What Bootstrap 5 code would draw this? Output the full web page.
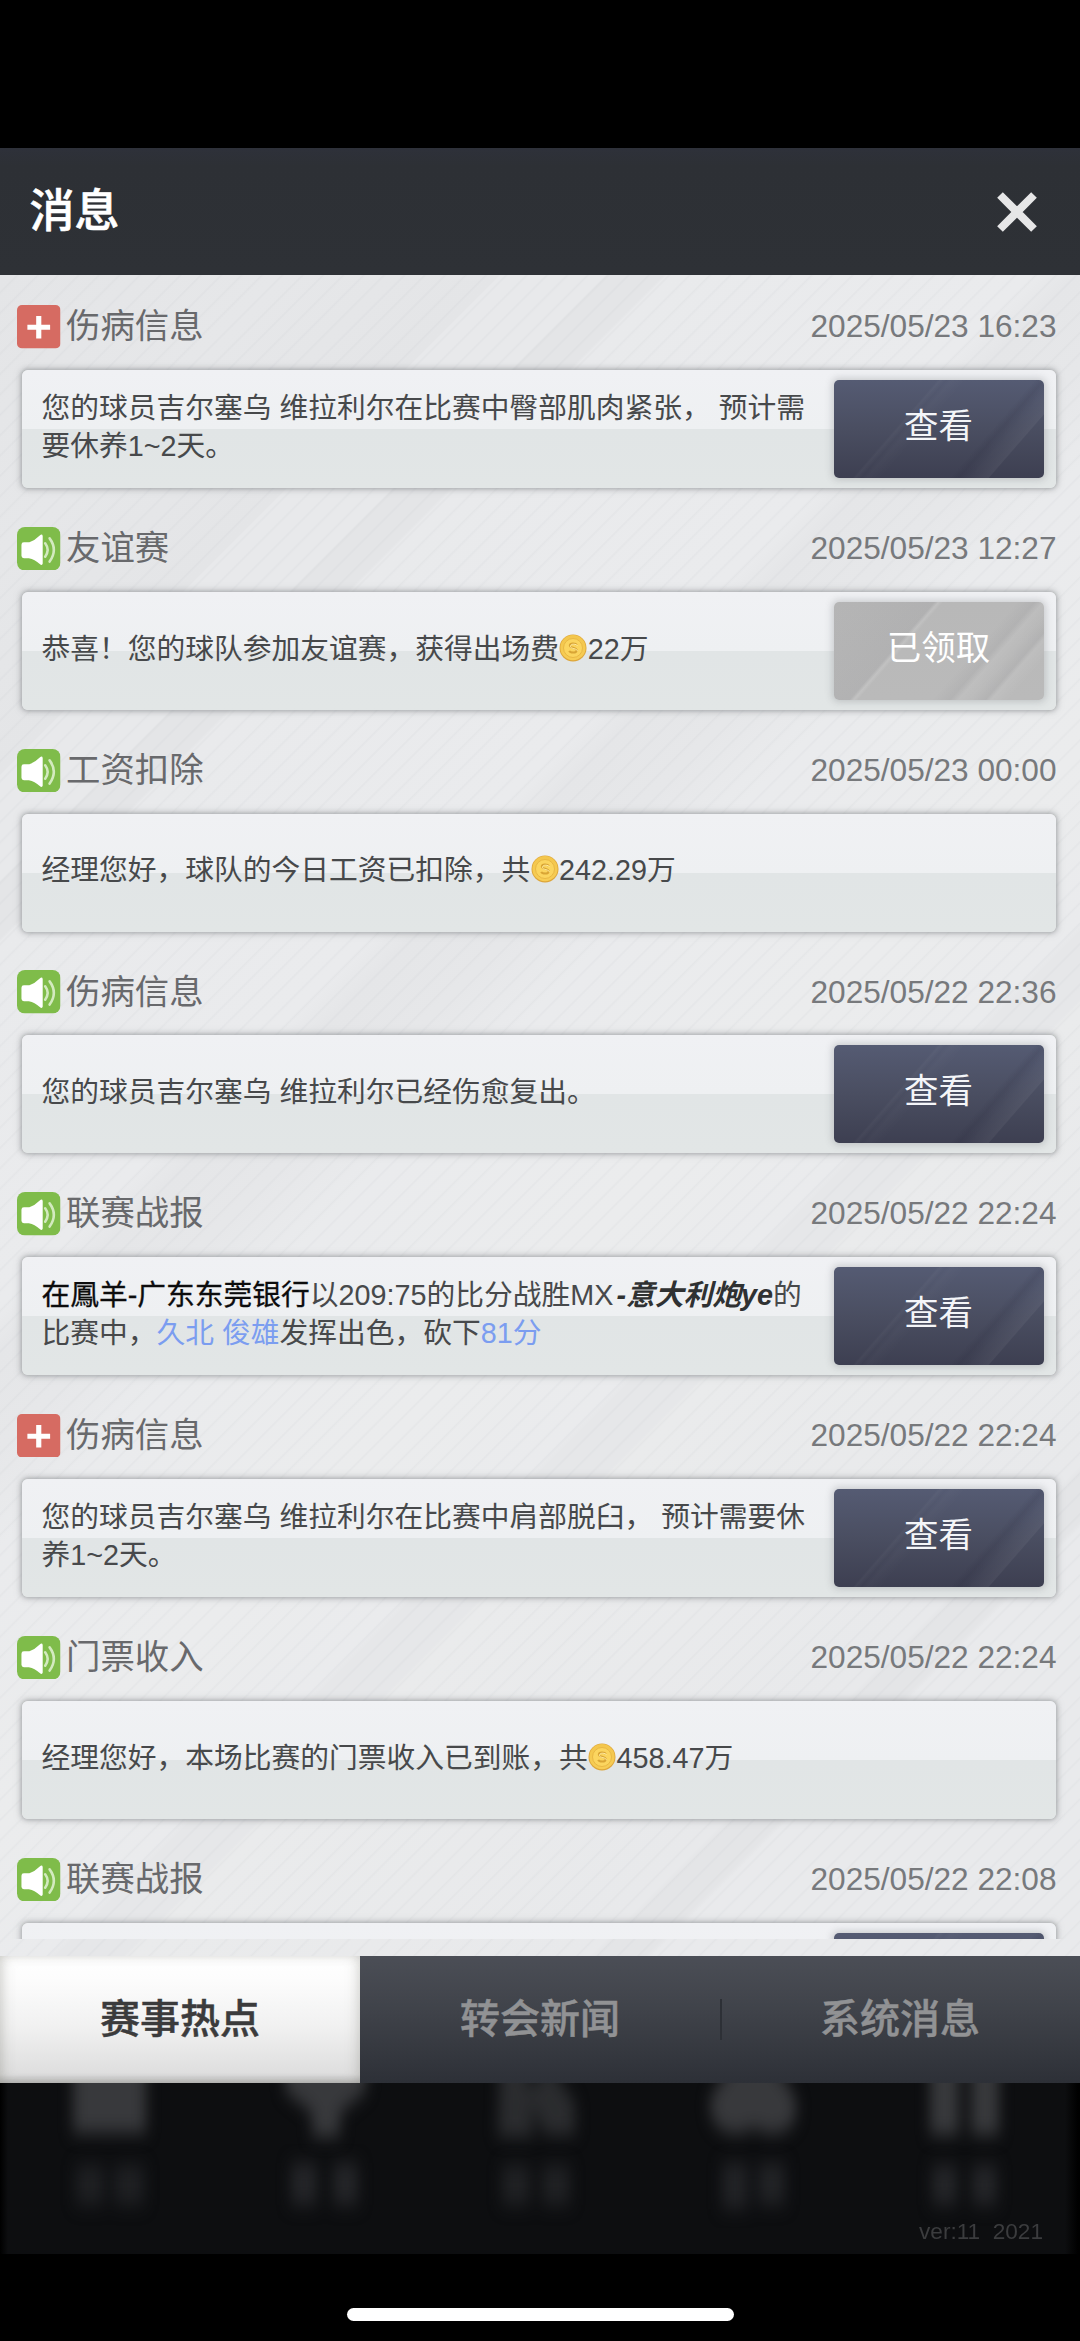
<!DOCTYPE html>
<html lang="zh-CN">
<head>
<meta charset="utf-8">
<meta name="viewport" content="width=device-width, initial-scale=1">
<title>消息</title>
<link href="https://cdn.jsdelivr.net/npm/bootstrap@5.3.0/dist/css/bootstrap.min.css" rel="stylesheet">
<style>
body{background:#000;font-family:"Liberation Sans","Noto Sans CJK SC",sans-serif;width:1080px;height:2341px;overflow:hidden}
.app-screen{height:2341px;padding-top:148px}
.top-bar{height:127px;background:linear-gradient(#2e313a,#2d3035 14%,#2e3136);padding:0 43px 0 29.5px}
.top-bar h1{font-size:45px;line-height:60px;color:#fff;font-weight:500;-webkit-text-stroke:.6px #fff}
.close-x{width:40px;height:40px}
.feed{height:1681px;padding-bottom:17px;
 background:
 repeating-linear-gradient(135deg,rgba(190,193,198,0) 0 11px,rgba(180,184,190,.1) 12.5px,rgba(190,193,198,0) 14.4px),
 linear-gradient(135deg,#e4e5e7 0,#e6e7e9 200px,#e4e5e7 353px,#e8e9eb 354px 428px,#e4e5e7 429px 469px,#e9eaec 472px,#eaebed 730px,#e5e6e8 760px,#e6e7e9 830px,#eaebed 900px,#ebeced 1100px,#eaebed 1220px,#e6e7e9 1228px 1276px,#eaebec 1279px,#e8e9eb 1605px,#e4e5e7 1612px 1645px,#e9eaec 1650px)}
.feed-list{height:1664px;overflow:hidden;padding-top:30px}
.msg{height:221.8px;padding:0 24px 0 17px;flex:none}
.msg-head{height:43.5px}
.msg-icon{width:43.5px;height:43.5px;flex:none}
.msg-title{font-size:34.4px;line-height:43px;color:#68696c;margin-left:5.5px}
.msg-date{font-size:31.6px;line-height:43px;color:#77797c;margin-right:-.5px}
.msg-card{height:118px;margin:21.5px 0 0 4.5px;border-radius:6px;padding:0 12.5px 0 20px;
 background:linear-gradient(#f0f1f4,#eef0f2 49.6%,#e1e5e6 50.4%,#e2e6e6);
 box-shadow:0 0 4px 1px rgba(120,123,126,.5),0 0 8px 1px rgba(120,123,126,.22)}
.msg-text{font-size:28.75px;line-height:37.7px;color:#47494b;white-space:pre;padding-bottom:2.5px}
.coin{width:28px;height:28px;vertical-align:-3px;margin:0 .4px}
.name-home{color:#0c0c0d;-webkit-text-stroke:.3px #0c0c0d}
.name-away{font-weight:700;font-style:italic;color:#2f3132;margin-left:3px}
.blue-link{color:#7b9df0}
.msg-btn{width:210px;height:98px;border:0;border-radius:5px;font-size:34.5px;line-height:52px;color:#f4f5f8;padding:0 0 6px;flex:none;
 background:linear-gradient(131deg,transparent 0 68%,rgba(25,25,45,.1) 71%,transparent 74%,rgba(255,255,255,.01) 75%,rgba(255,255,255,.05) 81%,transparent 81.5%),
 linear-gradient(131deg,transparent 35%,rgba(255,255,255,.03) 36%,transparent 38%,rgba(255,255,255,.02) 40%,transparent 45%),
 linear-gradient(#555b73,#4a4e61 50%,#3d3f51);
 box-shadow:0 0 7px 2px rgba(90,94,100,.25)}
.msg-btn.claimed{color:#fff;opacity:1;
 background:linear-gradient(131deg,transparent 0 62%,rgba(120,120,125,.1) 68%,rgba(255,255,255,.07) 71%,rgba(255,255,255,.02) 75%,rgba(130,130,135,.12) 80%,rgba(255,255,255,.08) 82%,transparent 88%),
 linear-gradient(131deg,rgba(130,130,135,.05) 0,rgba(130,130,135,.14) 34%,rgba(255,255,255,.12) 35.5%,transparent 37%),
 linear-gradient(#b8b8b8,#bababa)}
.tab-bar{height:127px;background:linear-gradient(#4b4e56,#3f4249 45%,#2d3037)}
.tab-bar .nav-link{font-size:40px;line-height:60px;font-weight:500;-webkit-text-stroke:.5px currentColor;color:#919294;padding:0 0 1.5px;border-radius:0;width:360px;height:127px;position:relative}
.tab-bar .nav-link.active{color:#3b3b3c;background:linear-gradient(#fff 0,#fcfcfc 20%,#f1f1f1 55%,#dedede 93%,#bcbcbc);box-shadow:inset 6px 0 13px -4px rgba(120,120,110,.35),inset -6px 0 13px -4px rgba(120,120,110,.3)}
.tab-bar .tab-split::before{content:"";position:absolute;left:0;top:43px;width:1.5px;height:41px;background:#2d3036}
.dim-nav{height:171px;background:linear-gradient(90deg,#000,#0d0e10 8px,#0d0e10 1065px,#000 1078px);padding:0 37px 9px}
.dim-art{left:0;top:0;width:1080px;height:171px}
.version{font-size:22.6px;line-height:26px;color:#3b3c3e;white-space:pre;position:relative}
.home-pill{width:387px;height:13px;border-radius:7px;background:#fff;margin-top:54px}
</style>
</head>
<body>
<svg width="0" height="0" class="position-absolute" aria-hidden="true">
 <defs>
  <linearGradient id="gold" x1="0" y1="0" x2="0" y2="1"><stop offset="0" stop-color="#f3c64c"/><stop offset="1" stop-color="#f7cd55"/></linearGradient>
 </defs>
 <symbol id="i-plus" viewBox="0 0 44 44"><rect width="44" height="44" rx="5" fill="#d66b62"/><path d="M22 11v23M10.500 22.500h23" stroke="#fff" stroke-width="5.200"/></symbol>
 <symbol id="i-horn" viewBox="0 0 44 44"><rect width="44" height="44" rx="8" fill="#7fbc4a"/>
  <path d="M4.500 18q0-2.500 2.500-2.500h5.500Q18 13.500 23 8.500Q25.500 6.500 26 9V37Q25.500 39.500 23 37.500Q18 32.500 12 31.500H7q-2.500 0-2.500-2.500z" fill="#fff"/>
  <path d="M28.500 16.500q5 6.500 0 13.500" fill="none" stroke="#d3eabf" stroke-width="2.600" stroke-linecap="round"/>
  <path d="M33 11.500q8.500 11.500 0 23.500" fill="none" stroke="#d3eabf" stroke-width="2.600" stroke-linecap="round"/></symbol>
 <symbol id="i-coin" viewBox="0 0 28 28"><circle cx="14" cy="14" r="13.500" fill="#dda63a"/><circle cx="14" cy="13.700" r="12.600" fill="url(#gold)"/><circle cx="14" cy="14" r="9.500" fill="#fbd55f" stroke="#e9b844" stroke-width="1"/>
  <path d="M17.800 11c-.8-1.800-6.800-2.600-7 .4-.2 3 7 1.800 6.900 5-.1 3-6.500 2.600-7.500.4" fill="none" stroke="#d9a535" stroke-width="2"/><path d="M18.500 11.800c-.8-1.800-6.800-2.600-7 .4-.2 3 7 1.800 6.900 5" fill="none" stroke="#ffeaa0" stroke-width="1"/></symbol>
</svg>

<div class="app-screen d-flex flex-column">
 <header class="top-bar d-flex align-items-center justify-content-between">
  <h1 class="m-0">消息</h1>
  <svg class="close-x" viewBox="0 0 40 40" role="button" aria-label="关闭"><path d="M3 3L37 37M37 3L3 37" stroke="#e6e6e7" stroke-width="8"/></svg>
 </header>

 <main class="feed">
  <div class="feed-list d-flex flex-column">
   <section class="msg">
    <div class="msg-head d-flex align-items-center"><svg class="msg-icon"><use href="#i-plus"/></svg><span class="msg-title me-auto">伤病信息</span><span class="msg-date">2025/05/23 16:23</span></div>
    <div class="msg-card d-flex align-items-center justify-content-between"><div class="msg-text">您的球员吉尔塞乌 维拉利尔在比赛中臀部肌肉紧张， 预计需
要休养1~2天。</div><button class="btn msg-btn">查看</button></div>
   </section>
   <section class="msg">
    <div class="msg-head d-flex align-items-center"><svg class="msg-icon"><use href="#i-horn"/></svg><span class="msg-title me-auto">友谊赛</span><span class="msg-date">2025/05/23 12:27</span></div>
    <div class="msg-card d-flex align-items-center justify-content-between"><div class="msg-text">恭喜！您的球队参加友谊赛，获得出场费<svg class="coin"><use href="#i-coin"/></svg>22万</div><button class="btn msg-btn claimed">已领取</button></div>
   </section>
   <section class="msg">
    <div class="msg-head d-flex align-items-center"><svg class="msg-icon"><use href="#i-horn"/></svg><span class="msg-title me-auto">工资扣除</span><span class="msg-date">2025/05/23 00:00</span></div>
    <div class="msg-card d-flex align-items-center"><div class="msg-text">经理您好，球队的今日工资已扣除，共<svg class="coin"><use href="#i-coin"/></svg>242.29万</div></div>
   </section>
   <section class="msg">
    <div class="msg-head d-flex align-items-center"><svg class="msg-icon"><use href="#i-horn"/></svg><span class="msg-title me-auto">伤病信息</span><span class="msg-date">2025/05/22 22:36</span></div>
    <div class="msg-card d-flex align-items-center justify-content-between"><div class="msg-text">您的球员吉尔塞乌 维拉利尔已经伤愈复出。</div><button class="btn msg-btn">查看</button></div>
   </section>
   <section class="msg">
    <div class="msg-head d-flex align-items-center"><svg class="msg-icon"><use href="#i-horn"/></svg><span class="msg-title me-auto">联赛战报</span><span class="msg-date">2025/05/22 22:24</span></div>
    <div class="msg-card d-flex align-items-center justify-content-between"><div class="msg-text"><span class="name-home">在鳳羊-广东东莞银行</span>以209:75的比分战胜MX<span class="name-away">-意大利炮ye</span>的
比赛中，<span class="blue-link">久北 俊雄</span>发挥出色，砍下<span class="blue-link">81分</span></div><button class="btn msg-btn">查看</button></div>
   </section>
   <section class="msg">
    <div class="msg-head d-flex align-items-center"><svg class="msg-icon"><use href="#i-plus"/></svg><span class="msg-title me-auto">伤病信息</span><span class="msg-date">2025/05/22 22:24</span></div>
    <div class="msg-card d-flex align-items-center justify-content-between"><div class="msg-text">您的球员吉尔塞乌 维拉利尔在比赛中肩部脱臼， 预计需要休
养1~2天。</div><button class="btn msg-btn">查看</button></div>
   </section>
   <section class="msg">
    <div class="msg-head d-flex align-items-center"><svg class="msg-icon"><use href="#i-horn"/></svg><span class="msg-title me-auto">门票收入</span><span class="msg-date">2025/05/22 22:24</span></div>
    <div class="msg-card d-flex align-items-center"><div class="msg-text">经理您好，本场比赛的门票收入已到账，共<svg class="coin"><use href="#i-coin"/></svg>458.47万</div></div>
   </section>
   <section class="msg">
    <div class="msg-head d-flex align-items-center"><svg class="msg-icon"><use href="#i-horn"/></svg><span class="msg-title me-auto">联赛战报</span><span class="msg-date">2025/05/22 22:08</span></div>
    <div class="msg-card d-flex align-items-center justify-content-end"><button class="btn msg-btn" aria-label="查看"></button></div>
   </section>
  </div>
 </main>

 <nav class="tab-bar nav flex-nowrap">
  <a class="nav-link active d-flex align-items-center justify-content-center">赛事热点</a>
  <a class="nav-link d-flex align-items-center justify-content-center">转会新闻</a>
  <a class="nav-link tab-split d-flex align-items-center justify-content-center">系统消息</a>
 </nav>

 <footer class="dim-nav position-relative overflow-hidden d-flex align-items-end justify-content-end">
  <svg class="dim-art position-absolute" viewBox="0 0 1080 171" aria-hidden="true">
   <defs><filter id="soft" x="-20%" y="-40%" width="140%" height="180%" color-interpolation-filters="sRGB"><feGaussianBlur stdDeviation="7 9"/></filter></defs>
   <g filter="url(#soft)" fill="#38393c">
    <path d="M73-40h73V50H73z"/>
    <path d="M285-30h81V8L340 30V54H312V30L285 8z"/>
    <path d="M500-30h26l8 84h-36zM548-20l27 40v32h-30l-18-40z" opacity=".7"/>
    <path d="M714 8l26-38h26l26 38q10 22-2 36-18 14-36 0-18 14-36 0-14-16-4-36z"/>
    <path d="M930-30h29V52h-29zM971-30h28V52h-28z"/>
   </g>
   <g filter="url(#soft)" fill="#242528">
    <path d="M76 82h28v40H76zM114 82h30v40h-30z" opacity=".75"/>
    <path d="M291 80h26v42h-26zM333 80h25v42h-25z"/>
    <path d="M502 82h28v40h-28zM542 82h28v40h-28z" opacity=".8"/>
    <path d="M722 80h26v46h-26zM758 80h27v42h-27z" opacity=".9"/>
    <path d="M932 82h25v40h-25zM972 82h25v40h-25z"/>
   </g>
  </svg>
  <span class="version">ver:11  2021</span>
 </footer>
 <div class="home-pill mx-auto"></div>
</div>
<script src="https://cdn.jsdelivr.net/npm/bootstrap@5.3.0/dist/js/bootstrap.bundle.min.js"></script>
</body>
</html>
